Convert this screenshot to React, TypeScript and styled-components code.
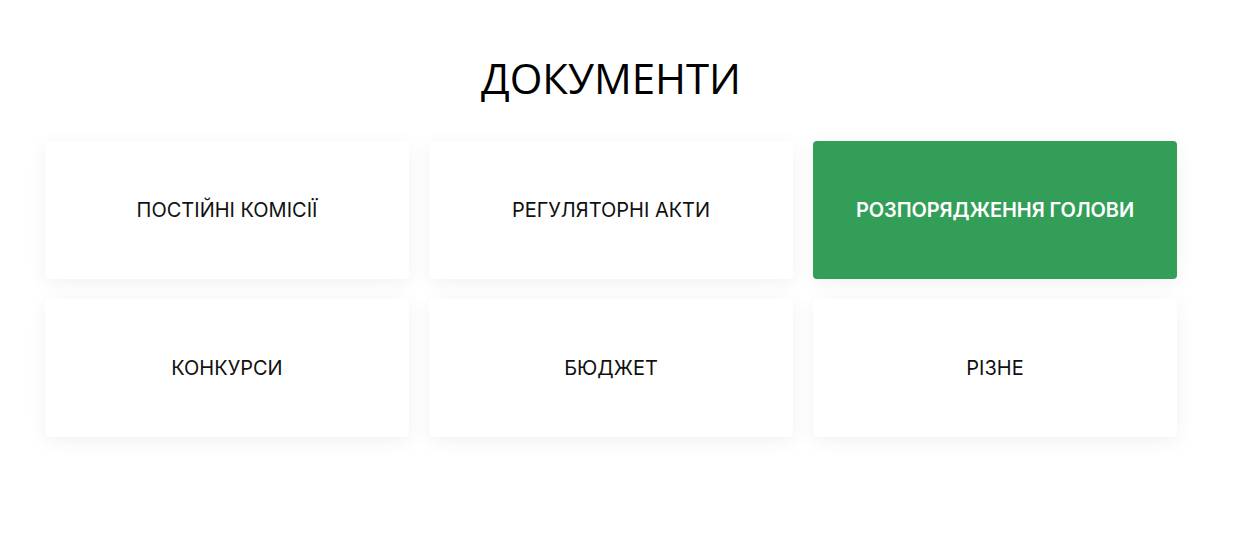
import React from "react";
import styled, { createGlobalStyle } from "styled-components";

const Global = createGlobalStyle`
  html, body { margin: 0; padding: 0; background: #fff; }
  body { font-family: Inter, "Noto Sans", sans-serif; }
`;

const Section = styled.section`
  width: 1132px;
  padding: 52px 0 120px 45px;
`;

const Title = styled.h2`
  margin: 0 0 37px;
  text-align: center;
  font-family: "Open Sans", "Noto Sans", sans-serif;
  font-weight: 400;
  font-size: 42px;
  line-height: 52px;
  color: #000;
`;

const Grid = styled.div`
  display: grid;
  grid-template-columns: repeat(3, 1fr);
  column-gap: 20px;
  row-gap: 20px;
`;

const Card = styled.a<{ $active?: boolean }>`
  display: flex;
  align-items: center;
  justify-content: center;
  height: 138px;
  border-radius: 4px;
  background: ${(p) => (p.$active ? "#329e57" : "#fff")};
  color: ${(p) => (p.$active ? "#fff" : "#111")};
  box-shadow: 0 4px 20px rgba(0, 0, 0, 0.06);
  font-family: Inter, "Noto Sans", sans-serif;
  font-size: 20px;
  font-weight: ${(p) => (p.$active ? 600 : 400)};
  letter-spacing: ${(p) => (p.$active ? "-0.1px" : "0")};
  text-transform: uppercase;
  text-decoration: none;
`;

const items = [
  { label: "Постійні комісії" },
  { label: "Регуляторні акти" },
  { label: "Розпорядження голови", active: true },
  { label: "Конкурси" },
  { label: "Бюджет" },
  { label: "Різне" },
];

export default function App() {
  return (
    <>
      <Global />
      <Section>
        <Title>ДОКУМЕНТИ</Title>
        <Grid>
          {items.map((it) => (
            <Card key={it.label} $active={it.active} href="#">
              {it.label}
            </Card>
          ))}
        </Grid>
      </Section>
    </>
  );
}
